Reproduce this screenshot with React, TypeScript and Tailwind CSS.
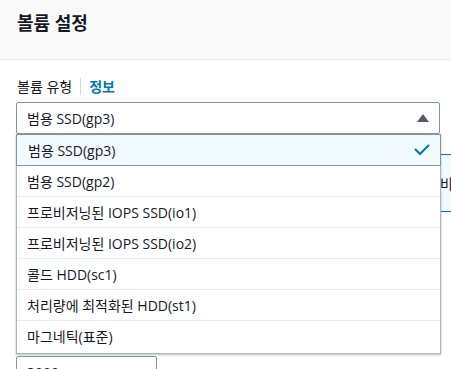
import React from "react";

const options = [
  "범용 SSD(gp2)",
  "프로비저닝된 IOPS SSD(io1)",
  "프로비저닝된 IOPS SSD(io2)",
  "콜드 HDD(sc1)",
  "처리량에 최적화된 HDD(st1)",
  "마그네틱(표준)",
];

export default function App() {
  return (
    <div
      className="relative w-[451px] h-[369px] overflow-hidden bg-white text-[#16191f]"
      style={{ fontFamily: '"Open Sans", "Noto Sans CJK KR", sans-serif' }}
    >
      {/* header */}
      <header className="h-[60px] bg-[#fafafa] border-b border-[#eaeded] pl-[17px] pt-[11px]">
        <h2 className="text-[18px] leading-[24px] font-bold">볼륨 설정</h2>
      </header>

      <div className="pl-[16px] pr-[11px] pt-[16px]">
        {/* label */}
        <div className="flex items-center h-[20px] text-[14px]">
          <span className="pl-[1px]">볼륨 유형</span>
          <span className="mx-[8px] w-px h-[17px] bg-[#d5dbdb]" />
          <span className="text-[#0073bb] font-semibold">정보</span>
        </div>

        {/* select */}
        <div className="mt-[6px] h-[32px] border border-[#879596] rounded-[2px] flex items-center justify-between pl-[10px] pr-[10px] text-[14px]">
          <span>범용 SSD(gp3)</span>
          <svg width="12" height="8" viewBox="0 0 12 8">
            <path d="M6 0 L12 8 L0 8 Z" fill="#545b64" />
          </svg>
        </div>

        {/* panel behind */}
        <div className="mt-[20px] h-[58px] -mr-[40px] border-y border-[#0073bb] bg-[#f1faff] flex items-center text-[14px]">
          <div className="w-[424px] shrink-0 border-r border-[#d5dbdb] h-full" />
          <span className="shrink-0">비교</span>
        </div>

        {/* iops input */}
        <div className="mt-[144px] w-[141px] h-[32px] border border-[#879596] rounded-[2px] flex items-center pl-[10px] text-[14px]">
          3000
        </div>
      </div>

      {/* dropdown */}
      <div className="absolute left-[16px] top-[134px] w-[425px] bg-white border-x border-b border-[#aab7b8] shadow-[0_1px_2px_rgba(0,28,36,0.3)] text-[14px]">
        <div className="-mx-px h-[32px] border border-[#879596] bg-[#f1faff] flex items-center justify-between pl-[11px] pr-[10px]">
          <span>범용 SSD(gp3)</span>
          <svg width="16" height="16" viewBox="0 0 16 16" fill="none">
            <path d="M1.5 7.5 L6 12 L14.5 3.5" stroke="#0073bb" strokeWidth="2" strokeLinecap="round" strokeLinejoin="round" />
          </svg>
        </div>
        {options.map((o, i) => (
          <div
            key={o}
            className={
              i === 0
                ? "h-[30px] flex items-center pl-[10px]"
                : i === options.length - 1
                  ? "h-[33px] border-t border-[#eaeded] flex items-center pl-[10px] pb-[2px]"
                  : "h-[31px] border-t border-[#eaeded] flex items-center pl-[10px]"
            }
          >
            {o}
          </div>
        ))}
      </div>
    </div>
  );
}
